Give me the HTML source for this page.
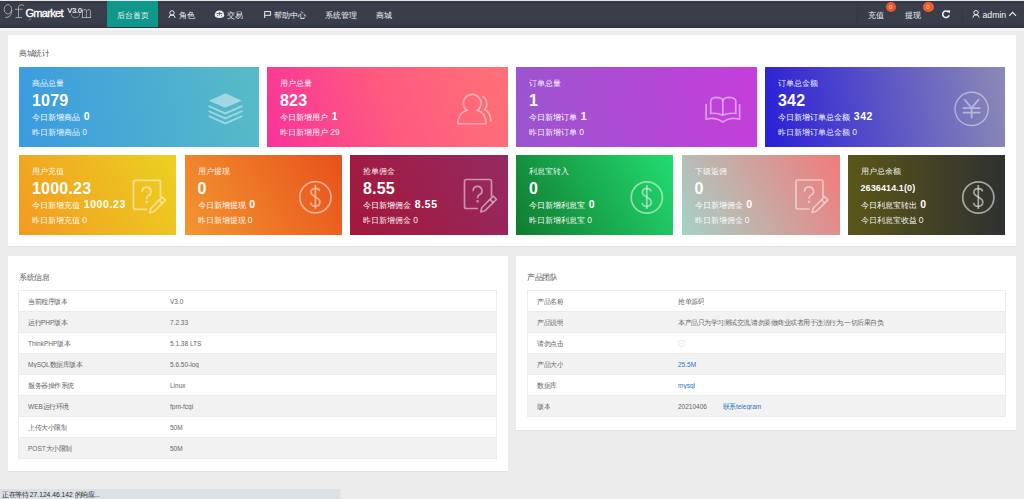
<!DOCTYPE html>
<html><head><meta charset="utf-8">
<style>
*{margin:0;padding:0;box-sizing:border-box}
html,body{width:1024px;height:499px;overflow:hidden}
body{background:#ececec;font-family:"Liberation Sans",sans-serif;position:relative;color:#333}
.abs{position:absolute}
#top{position:absolute;left:0;top:0;width:1024px;height:1px;background:#e6e6e6}
#nav{position:absolute;left:0;top:1px;width:1024px;height:26.5px;background:linear-gradient(#373845 0,#3a3d4a 4px,#393e4b 20px,#363a46 25px,#30333f 26.5px)}
#band{position:absolute;left:0;top:27.5px;width:1024px;height:3px;background:#f3f3f4}
.nt{position:absolute;top:1px;height:26px;line-height:29px;color:#f4f4f4;font-size:8px;white-space:nowrap}
#act{position:absolute;left:107px;top:1px;width:51px;height:26px;background:#0e978a}
.card{position:absolute;background:#fff;box-shadow:0 1px 1px rgba(0,0,0,0.04)}
.ctitle{position:absolute;font-size:15px;color:#555;line-height:1;white-space:nowrap;transform:scale(0.5);transform-origin:0 0}
.box{position:absolute;color:#fff;overflow:hidden}
.box .t{position:absolute;left:13px;top:12px;font-size:8px;line-height:10px;white-space:nowrap;color:rgba(255,255,255,0.95)}
.box .n{position:absolute;left:13px;top:25px;font-size:16px;font-weight:bold;line-height:17px;white-space:nowrap;letter-spacing:0.2px}
.box .a{position:absolute;left:13px;top:43px;font-size:8px;line-height:12px;white-space:nowrap}
.box .a b{font-size:10.5px;font-weight:bold;letter-spacing:0.6px;margin-left:1.5px}
.box .y{position:absolute;left:13px;top:59.5px;font-size:8px;line-height:10px;white-space:nowrap;color:rgba(255,255,255,0.95)}
.box .y i{font-style:normal;font-size:8.5px}
.tb{position:absolute;border:1px solid #ececec;background:#fff}
.tr{position:absolute;left:0;height:21px;border-top:1px solid #ececec}
.sc{position:absolute;transform:scale(0.5);transform-origin:0 0;white-space:nowrap;line-height:1}
.tt{font-size:13px;color:#666}
.lk{font-style:normal;color:#2b74b9}
.ci{display:inline-block;width:15px;height:15px;border:2px solid #e6e6e6;border-radius:50%;vertical-align:middle;position:relative;margin-top:-2px}
.ci:after{content:"";position:absolute;left:3px;top:5.5px;width:5px;height:1.5px;background:#e0e0e0}
#status{position:absolute;left:0;top:488px;width:341px;height:11px;background:#dde0e5;border-top:1px solid #e9ebee;border-right:1px solid #e4e6ea;font-size:8.5px;line-height:11px;color:#333;padding-left:3px;white-space:nowrap}
svg.ov{position:absolute;left:0;top:0;width:1024px;height:499px;overflow:visible}
</style></head><body>
<div id="top"></div>
<div id="nav"></div><div id="band"></div><div class="abs" style="left:857px;top:1px;width:1px;height:26px;background:#343744"></div><div class="abs" style="left:962px;top:1px;width:1px;height:26px;background:#363945"></div>
<div id="act"></div>
<!-- logo -->
<svg class="abs" style="left:0;top:0" width="100" height="27" viewBox="0 0 100 27">
<g fill="none" stroke="rgba(205,205,215,0.75)" stroke-width="0.9">
<path d="M11.6 9.2A3.7 4.6 0 1 0 11.6 9.4V11.5Q11.6 17.2 5.2 17.6"/>
<path d="M24.2 5.6Q21.5 4 19.4 5.3Q18.5 6 18.5 8V17.5M15 9.3H22.5M15.5 17.5H22"/>
<path d="M82.5 17.5V9.5M82.5 11Q84 9.3 85.2 9.5Q86.4 9.7 86.4 11V17.5M86.4 11Q88 9.3 89.2 9.5Q90.4 9.7 90.4 11V17.5M81.5 17.5H91.3"/>
<path d="M71.3 13.8A4.2 3.8 0 0 0 79.7 13.8" stroke="rgba(205,205,215,0.55)"/>
<path d="M31 17.8Q31 20 28.5 20.2" stroke="rgba(205,205,215,0.5)"/>
</g>
</svg>
<div class="abs" style="left:25.5px;top:6px;color:#fff;font-size:11px;line-height:14px;letter-spacing:-0.7px;-webkit-text-stroke:0.35px #fff">Gmarket</div>
<div class="abs" style="left:67.5px;top:7px;color:#fff;font-size:7px;line-height:8px;-webkit-text-stroke:0.15px #fff">V3.0</div>

<div class="nt" style="left:117px">后台首页</div>
<div class="nt" style="left:179px">角色</div>
<div class="nt" style="left:227px">交易</div>
<div class="nt" style="left:274px">帮助中心</div>
<div class="nt" style="left:325px">系统管理</div>
<div class="nt" style="left:376px">商城</div>
<div class="nt" style="left:868px">充值</div>
<div class="nt" style="left:904.5px">提现</div>
<div class="nt" style="left:982.5px;font-size:8.7px">admin</div>
<!-- badges -->
<div class="abs" style="left:885.5px;top:1.8px;width:10.5px;height:10.5px;border-radius:50%;background:#e55a2c;color:#fbd2b0;font-size:6px;line-height:10.5px;text-align:center">0</div>
<div class="abs" style="left:922.5px;top:1.8px;width:11px;height:10.5px;border-radius:50%;background:#ea5f2c;color:#fbd2b0;font-size:6px;line-height:10.5px;text-align:center">0</div>

<!-- stats card -->
<div class="card" style="left:8px;top:35px;width:1008px;height:211px"></div>
<div class="ctitle" style="left:19px;top:48.5px">商城统计</div>

<div class="box" style="left:19px;top:67px;width:240px;height:80px;background:linear-gradient(80deg,#3b9be0,#58bcc6)">
 <div class="t">商品总量</div><div class="n">1079</div><div class="a">今日新增商品 <b>0</b></div><div class="y">昨日新增商品 <i>0</i></div>
</div>
<div class="box" style="left:267px;top:67px;width:241px;height:80px;background:linear-gradient(70deg,#f7339a,#fe5a80 50%,#ff7276)">
 <div class="t">用户总量</div><div class="n">823</div><div class="a">今日新增用户 <b>1</b></div><div class="y">昨日新增用户 <i>29</i></div>
</div>
<div class="box" style="left:516px;top:67px;width:241px;height:80px;background:linear-gradient(80deg,#9a55cf,#c63edb)">
 <div class="t">订单总量</div><div class="n">1</div><div class="a">今日新增订单 <b>1</b></div><div class="y">昨日新增订单 <i>0</i></div>
</div>
<div class="box" style="left:765px;top:67px;width:240px;height:80px;background:linear-gradient(80deg,#2a1fd6,#8c8ab6)">
 <div class="t">订单总金额</div><div class="n">342</div><div class="a">今日新增订单总金额 <b>342</b></div><div class="y">昨日新增订单总金额 <i>0</i></div>
</div>

<div class="box" style="left:19px;top:155px;width:157px;height:80px;background:linear-gradient(60deg,#f29a22,#ecd121)">
 <div class="t">用户充值</div><div class="n">1000.23</div><div class="a">今日新增充值 <b>1000.23</b></div><div class="y">昨日新增充值 <i>0</i></div>
</div>
<div class="box" style="left:184.5px;top:155px;width:157.5px;height:80px;background:linear-gradient(60deg,#f29630,#e8511c)">
 <div class="t">用户提现</div><div class="n">0</div><div class="a">今日新增提现 <b>0</b></div><div class="y">昨日新增提现 <i>0</i></div>
</div>
<div class="box" style="left:350px;top:155px;width:158px;height:80px;background:linear-gradient(60deg,#a3173a,#952a62)">
 <div class="t">抢单佣金</div><div class="n">8.55</div><div class="a">今日新增佣金 <b>8.55</b></div><div class="y">昨日新增佣金 <i>0</i></div>
</div>
<div class="box" style="left:516px;top:155px;width:157px;height:80px;background:linear-gradient(60deg,#127a30,#22dc70)">
 <div class="t">利息宝转入</div><div class="n">0</div><div class="a">今日新增利息宝 <b>0</b></div><div class="y">昨日新增利息宝 <i>0</i></div>
</div>
<div class="box" style="left:681.5px;top:155px;width:158px;height:80px;background:linear-gradient(60deg,#a5d2c8,#f27a7a)">
 <div class="t">下级返佣</div><div class="n">0</div><div class="a">今日新增佣金 <b>0</b></div><div class="y">昨日新增佣金 <i>0</i></div>
</div>
<div class="box" style="left:847.5px;top:155px;width:157.5px;height:80px;background:linear-gradient(90deg,#5b5618,#2e3131)">
 <div class="t">用户总余额</div><div class="n" style="font-size:9px;top:25px;letter-spacing:0.1px">2636414.1(0)</div><div class="a">今日利息宝转出 <b>0</b></div><div class="y">今日利息宝收益 <i>0</i></div>
</div>

<!-- system info -->
<div class="card" style="left:8px;top:256px;width:500px;height:215px"></div>
<div class="ctitle" style="left:19px;top:272.5px">系统信息</div>
<div class="tb" style="left:18px;top:290px;width:479px;height:169px">
<div class="tr" style="top:0px;width:477px;background:#fff;border-top:none;height:20px"></div>
<div class="tr" style="top:20px;width:477px;background:#f2f2f2;height:21px"></div>
<div class="tr" style="top:41px;width:477px;background:#fff;height:21px"></div>
<div class="tr" style="top:62px;width:477px;background:#f2f2f2;height:21px"></div>
<div class="tr" style="top:83px;width:477px;background:#fff;height:21px"></div>
<div class="tr" style="top:104px;width:477px;background:#f2f2f2;height:21px"></div>
<div class="tr" style="top:125px;width:477px;background:#fff;height:21px"></div>
<div class="tr" style="top:146px;width:477px;background:#f2f2f2;height:21px"></div>
<span class="sc tt" style="left:8.5px;top:7px">当前程序版本</span>
<span class="sc tt" style="left:151px;top:7px">V3.0</span>
<span class="sc tt" style="left:8.5px;top:28px">运行PHP版本</span>
<span class="sc tt" style="left:151px;top:28px">7.2.33</span>
<span class="sc tt" style="left:8.5px;top:49px">ThinkPHP版本</span>
<span class="sc tt" style="left:151px;top:49px">5.1.38 LTS</span>
<span class="sc tt" style="left:8.5px;top:70px">MySQL数据库版本</span>
<span class="sc tt" style="left:151px;top:70px">5.6.50-log</span>
<span class="sc tt" style="left:8.5px;top:91px">服务器操作系统</span>
<span class="sc tt" style="left:151px;top:91px">Linux</span>
<span class="sc tt" style="left:8.5px;top:112px">WEB运行环境</span>
<span class="sc tt" style="left:151px;top:112px">fpm-fcgi</span>
<span class="sc tt" style="left:8.5px;top:133px">上传大小限制</span>
<span class="sc tt" style="left:151px;top:133px">50M</span>
<span class="sc tt" style="left:8.5px;top:154px">POST大小限制</span>
<span class="sc tt" style="left:151px;top:154px">50M</span>
</div>
<!-- product team -->
<div class="card" style="left:516px;top:256px;width:500px;height:174px"></div>
<div class="ctitle" style="left:527px;top:272.5px">产品团队</div>
<div class="tb" style="left:527px;top:290px;width:479px;height:127px">
<div class="tr" style="top:0px;width:477px;background:#fff;border-top:none;height:20px"></div>
<div class="tr" style="top:20px;width:477px;background:#f2f2f2;height:21px"></div>
<div class="tr" style="top:41px;width:477px;background:#fff;height:21px"></div>
<div class="tr" style="top:62px;width:477px;background:#f2f2f2;height:21px"></div>
<div class="tr" style="top:83px;width:477px;background:#fff;height:21px"></div>
<div class="tr" style="top:104px;width:477px;background:#f2f2f2;height:21px"></div>
<span class="sc tt" style="left:8.5px;top:7px">产品名称</span>
<span class="sc tt" style="left:150px;top:7px">抢单源码</span>
<span class="sc tt" style="left:8.5px;top:28px">产品说明</span>
<span class="sc tt" style="left:150px;top:28px">本产品只为学习测试交流,请勿要做商业或者用于违法行为,一切后果自负</span>
<span class="sc tt" style="left:8.5px;top:49px">请勿点击</span>
<span class="sc tt" style="left:150px;top:49px"><i class="ci"></i></span>
<span class="sc tt" style="left:8.5px;top:70px">产品大小</span>
<span class="sc tt" style="left:150px;top:70px"><i class="lk">25.5M</i></span>
<span class="sc tt" style="left:8.5px;top:91px">数据库</span>
<span class="sc tt" style="left:150px;top:91px"><i class="lk">mysql</i></span>
<span class="sc tt" style="left:8.5px;top:112px">版本</span>
<span class="sc tt" style="left:150px;top:112px">20210406<i class="lk" style="margin-left:32px">联系telegram</i></span>
</div>
<div id="status"><span class="sc" style="left:2px;top:2px;font-size:13.4px;color:#2a2a2a">正在等待 27.124.46.142 的响应...</span></div>

<svg class="ov" viewBox="0 0 1024 499">

<g fill="none" stroke="#f0f0f0" stroke-width="1">
 <circle cx="172" cy="12.9" r="2.2"/>
 <path d="M168.9 17.9Q168.9 15 172 15Q175.1 15 175.1 17.9"/>
 <circle cx="976" cy="12.7" r="2.2"/>
 <path d="M972.9 17.6Q972.9 14.8 976 14.8Q979.1 14.8 979.1 17.6"/>
 <path d="M264.7 18V11.3M264.7 11.6H270.6V15.3H264.7"/>
 <path d="M1009.2 15.8L1012.6 12.4L1016 15.8" stroke-width="1.1"/>
 <path d="M948.7 12.3A3.3 3.3 0 1 0 949.2 15.2" stroke-width="1.6"/>
</g>
<path d="M947.2 10.3L950.3 10.6L949.6 13.5Z" fill="#f0f0f0"/>
<path d="M214.8 15.2Q214.8 10.4 219.5 10.4Q224.2 10.4 224.2 15.2Q224.2 17.9 219.5 17.9Q214.8 17.9 214.8 15.2Z" fill="#eeeeee"/>
<path d="M216.6 13.4H222.4M219.5 12.2V15.2M217 16.2L218.2 15M222 16.2L220.8 15" stroke="#3a3c4b" stroke-width="0.8" fill="none"/>

<g fill="rgba(255,255,255,0.45)" stroke="none"><path d="M225.6 93.2L241.7 100.8L225.2 107.8L208.8 100.8Z"/></g>
<g fill="none" stroke="rgba(255,255,255,0.45)" stroke-width="1.8"><path d="M208.5 106L225.3 113.4L242.5 106"/><path d="M208.5 111L225.3 118.4L242.5 111"/><path d="M208.5 116L225.3 123.4L242.5 116"/></g>
<g fill="none" stroke="rgba(255,255,255,0.45)" stroke-width="1.6"><path d="M467 110.3A8.8 8.8 0 1 1 477.4 110.3C483 112 486 116.5 486 123.8H457.8C457.8 116.5 461 112 467 110.3Z"/><path d="M482.3 96.2C487.5 98.5 488 106.5 484.5 109.3C488.5 111.5 490.8 115.5 490.8 121.5"/></g>
<g fill="none" stroke="rgba(255,255,255,0.48)" stroke-width="1.7"><path d="M710.7 113.5V101.5Q710.7 97.5 716 97.3Q721 97.3 722.8 100Q724.6 97.3 729.6 97.3Q735.8 97.5 735.8 101.5V113.5Q729 112.5 722.8 115.3Q716.5 112.5 710.7 113.5Z"/><path d="M722.8 100V115"/><path d="M706.1 104V119.3Q715 116.5 722.8 122Q730.5 116.5 739.6 119.3V104"/></g>
<g fill="none" stroke="rgba(255,255,255,0.45)" stroke-width="1.4"><circle cx="971.6" cy="108.9" r="16.6"/><path stroke-width="1.8" d="M964.1 99.2L971.6 107.8L979.1 99.2M962.8 108.2H980.4M962.8 112.6H980.4M971.6 107.8V118.6"/></g>
<g fill="none" stroke="rgba(255,255,255,0.5)" stroke-width="1.7" stroke-linejoin="round"><path d="M160.5 197.3V182.3Q160.5 180.3 158.5 180.3H135.5Q133.5 180.3 133.5 182.3V207.3Q133.5 209.3 135.5 209.3H147.0" />
<path d="M142.2 191.9A4.4 4.4 0 1 1 148.3 195.60000000000002Q146.5 196.60000000000002 146.5 199.10000000000002" />
<circle cx="146.5" cy="202.10000000000002" r="0.5" />
<path d="M149.6 212.8L150.9 208.3L162.2 197.0L165.4 200.20000000000002L154.1 211.5Z" />
<path d="M159.0 200.20000000000002L162.2 203.4" /></g>
<g fill="none" stroke="rgba(255,255,255,0.5)" stroke-width="1.7"><circle cx="315.4" cy="197.3" r="15.6" />
<path d="M319.59999999999997 191.10000000000002C319.2 187.70000000000002 311.0 187.10000000000002 311.0 192.3C311.0 196.70000000000002 319.9 197.10000000000002 319.9 201.9C319.9 207.5 311.2 207.5 310.9 202.5" />
<path d="M315.4 184.8V208.8" /></g>
<g fill="none" stroke="rgba(255,255,255,0.5)" stroke-width="1.7" stroke-linejoin="round"><path d="M491.5 196.5V181.5Q491.5 179.5 489.5 179.5H466.5Q464.5 179.5 464.5 181.5V206.5Q464.5 208.5 466.5 208.5H478.0" />
<path d="M473.2 191.1A4.4 4.4 0 1 1 479.3 194.8Q477.5 195.8 477.5 198.3" />
<circle cx="477.5" cy="201.3" r="0.5" />
<path d="M480.6 212.0L481.90000000000003 207.5L493.20000000000005 196.2L496.40000000000003 199.4L485.1 210.7Z" />
<path d="M490.0 199.4L493.20000000000005 202.6" /></g>
<g fill="none" stroke="rgba(255,255,255,0.5)" stroke-width="1.7"><circle cx="646.8" cy="197.5" r="15.6" />
<path d="M651.0 191.3C650.5999999999999 187.9 642.4 187.3 642.4 192.5C642.4 196.9 651.3 197.3 651.3 202.1C651.3 207.7 642.5999999999999 207.7 642.3 202.7" />
<path d="M646.8 185.0V209.0" /></g>
<g fill="none" stroke="rgba(255,255,255,0.5)" stroke-width="1.7" stroke-linejoin="round"><path d="M823 197V182Q823 180 821 180H798Q796 180 796 182V207Q796 209 798 209H809.5" />
<path d="M804.7 191.6A4.4 4.4 0 1 1 810.8 195.3Q809 196.3 809 198.8" />
<circle cx="809" cy="201.8" r="0.5" />
<path d="M812.1 212.5L813.4 208.0L824.7 196.7L827.9 199.9L816.6 211.2Z" />
<path d="M821.5 199.9L824.7 203.1" /></g>
<g fill="none" stroke="rgba(255,255,255,0.55)" stroke-width="1.7"><circle cx="978.3" cy="197.5" r="15.6" />
<path d="M982.5 191.3C982.0999999999999 187.9 973.9 187.3 973.9 192.5C973.9 196.9 982.8 197.3 982.8 202.1C982.8 207.7 974.0999999999999 207.7 973.8 202.7" />
<path d="M978.3 185.0V209.0" /></g>
</svg>
</body></html>
